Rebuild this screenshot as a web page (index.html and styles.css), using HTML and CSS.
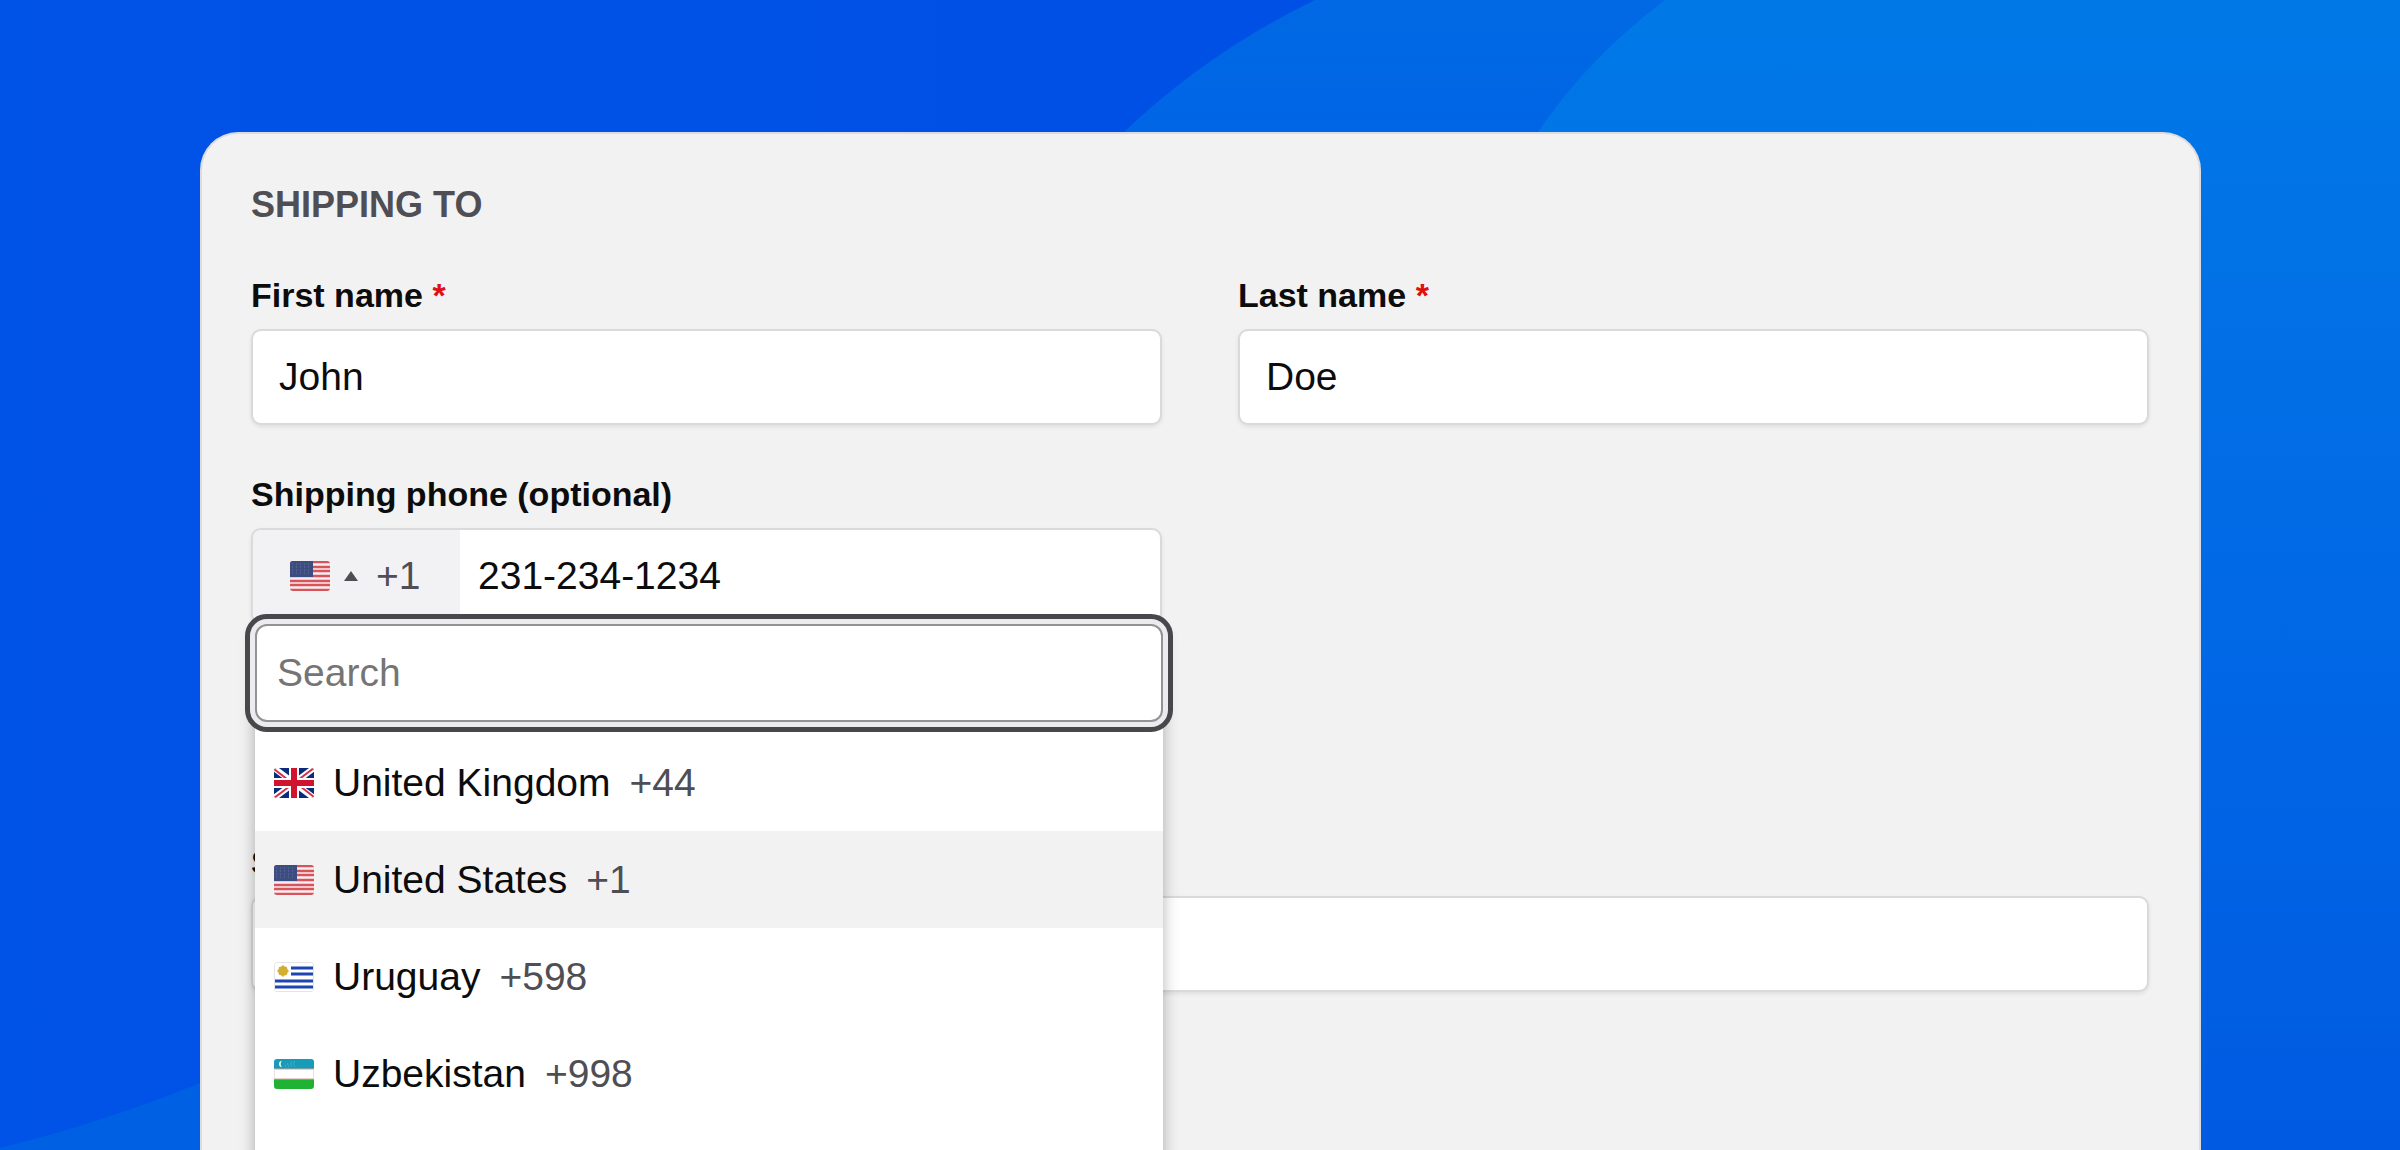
FILE: index.html
```html
<!DOCTYPE html>
<html lang="en">
<head>
    <meta charset="UTF-8">
    <title>Shipping details</title>
    <link rel="stylesheet" href="styles.css">
</head>
<body>
    <svg class="backdrop" viewBox="0 0 2400 1150" preserveAspectRatio="none" aria-hidden="true">
        <defs>
            <linearGradient id="base" x1="0" y1="0" x2="1" y2="0">
                <stop offset="0" stop-color="#0053e7"/>
                <stop offset="0.5" stop-color="#0050e6"/>
            </linearGradient>
            <linearGradient id="outer" x1="0" y1="0" x2="0" y2="1">
                <stop offset="0" stop-color="#0069e3"/>
                <stop offset="0.12" stop-color="#0065e6"/>
                <stop offset="1" stop-color="#0060e4"/>
            </linearGradient>
            <linearGradient id="inner" x1="0" y1="0" x2="0" y2="1">
                <stop offset="0" stop-color="#0079e6"/>
                <stop offset="0.3" stop-color="#026fe6"/>
                <stop offset="0.6" stop-color="#0066e5"/>
                <stop offset="1" stop-color="#005be2"/>
            </linearGradient>
        </defs>
        <rect width="2400" height="1150" fill="url(#base)"/>
        <path d="M1315 0Q1208 52 1124 132L1000 400L400 1000L200 1083Q105 1122 0 1148V1150H2400V0Z" fill="url(#outer)"/>
        <path d="M1665 0Q1588 58 1538 132L1400 1150H2400V0Z" fill="url(#inner)"/>
    </svg>

    <!-- flags, shared by the dial code button and the country list -->
    <svg class="sprite" aria-hidden="true">
        <symbol id="flag-us" viewBox="0 0 40 30">
            <rect width="40" height="30" fill="#f6eef0"/>
            <path d="M0 1H40M0 6H40M0 10H40M0 15H40M0 20H40M0 24H40M0 29H40" stroke="#d9535b" stroke-width="2.4"/>
            <rect width="23" height="16" fill="#3c4d80"/>
            <path d="M2 3H22M2 6H22M2 9H22M2 12H22" stroke="#65729a" stroke-width="1" stroke-dasharray="1 3"/>
        </symbol>
        <symbol id="flag-gb" viewBox="0 0 40 30">
            <rect width="40" height="30" fill="#0a2a7c"/>
            <path d="M0 0L40 30M40 0L0 30" stroke="#fff" stroke-width="6"/>
            <path d="M0 1L18 15M40 0L20 15M20 15L0 30M22 15L40 29" stroke="#d5304a" stroke-width="2"/>
            <path d="M20 0V30M0 15H40" stroke="#fff" stroke-width="10"/>
            <path d="M20 0V30M0 15H40" stroke="#d0142f" stroke-width="6"/>
        </symbol>
        <symbol id="flag-uy" viewBox="0 0 40 30">
            <rect width="40" height="30" fill="#fff"/>
            <path d="M17 6H40M17 12H40M0 19H40M0 25H40" stroke="#1f45b0" stroke-width="3"/>
            <circle cx="9" cy="9" r="5" fill="#d3ae35"/>
            <path d="M9 3V15M3 9H15M5 5L13 13M13 5L5 13" stroke="#d3ae35" stroke-width="1"/>
            <rect x="0.5" y="0.5" width="39" height="29" rx="2" fill="none" stroke="#e4e4e6"/>
        </symbol>
        <symbol id="flag-uz" viewBox="0 0 40 30">
            <rect width="40" height="30" fill="#fff"/>
            <rect width="40" height="10" fill="#169bb8"/>
            <rect y="20" width="40" height="10" fill="#20b233"/>
            <path d="M0 10H40M0 20H40" stroke="#d9a199" stroke-width="1"/>
            <path d="M0.5 10V20M39.5 10V20" stroke="#e4e4e6" stroke-width="1"/>
            <path d="M8 2A3 3 0 1 0 8 8A4 4 0 0 1 8 2Z" fill="#fff"/>
            <path d="M11 7H22M13 5H22M17 3H22" stroke="#5fb9cc" stroke-width="1" stroke-dasharray="1 2"/>
        </symbol>
    </svg>

    <form class="card">
        <h2 class="title">SHIPPING TO</h2>
        <div class="grid">
            <div class="field">
                <label for="firstName">First name <span class="required">*</span></label>
                <input class="input" type="text" id="firstName" value="John">
            </div>
            <div class="field">
                <label for="lastName">Last name <span class="required">*</span></label>
                <input class="input" type="text" id="lastName" value="Doe">
            </div>
            <div class="field">
                <label for="phone">Shipping phone (optional)</label>
                <div class="phone">
                    <button class="dial" type="button" aria-expanded="true">
                        <svg class="flag"><use href="#flag-us"/></svg>
                        <span class="arrow"></span>
                        <span>+1</span>
                    </button>
                    <input class="phone-input" type="tel" id="phone" value="231-234-1234">
                    <div class="dropdown">
                        <input class="search" type="text" placeholder="Search" aria-label="Search">
                        <ul class="countries">
                            <li class="country"><svg class="flag"><use href="#flag-gb"/></svg><span>United Kingdom</span><span class="code">+44</span></li>
                            <li class="country active"><svg class="flag"><use href="#flag-us"/></svg><span>United States</span><span class="code">+1</span></li>
                            <li class="country"><svg class="flag"><use href="#flag-uy"/></svg><span>Uruguay</span><span class="code">+598</span></li>
                            <li class="country"><svg class="flag"><use href="#flag-uz"/></svg><span>Uzbekistan</span><span class="code">+998</span></li>
                        </ul>
                    </div>
                </div>
            </div>
            <div class="field wide">
                <label for="street">Street</label>
                <input class="input" type="text" id="street">
            </div>
        </div>
    </form>
</body>
</html>
```

FILE: styles.css
```css
* {
    box-sizing: border-box;
}
body {
    margin: 0;
    height: 100vh;
    overflow: hidden;
    display: flex;
    font-family: "Liberation Sans", Arial, sans-serif;
    font-size: 39px;
    color: #0c0c0d;
    background: #0052e6;
}
.backdrop {
    position: absolute;
    top: 0;
    left: 0;
    width: 100%;
    height: 100%;
    z-index: -1;
}
.sprite {
    position: absolute;
    width: 0;
    height: 0;
}
.card {
    flex: 1;
    margin: 132px 199px 0 200px;
    padding: 47px 50px 0 49px;
    background: #f2f2f3;
    border: 2px solid #dcdcde;
    border-bottom: none;
    border-radius: 38px 38px 0 0;
}
.title {
    margin: 0 0 48px;
    font-size: 36px;
    line-height: 48px;
    color: #504e55;
}
.grid {
    display: grid;
    grid-template-columns: 1fr 1fr;
    gap: 51px 76px;
}
.field {
    display: flex;
    flex-direction: column;
    gap: 16px;
}
.wide {
    grid-column: 1 / -1;
    margin-top: 169px;
}
label {
    font-size: 34px;
    font-weight: bold;
    line-height: 36px;
}
.required {
    color: #e01010;
}
.input,
.phone {
    height: 96px;
    background: #fff;
    border: 2px solid #dadadc;
    border-radius: 10px;
    box-shadow: 0 2px 4px rgba(0, 0, 0, 0.08);
}
input {
    width: 100%;
    padding: 0 26px;
    font: inherit;
    color: inherit;
}
.phone {
    position: relative;
    display: flex;
}
.dial {
    display: flex;
    align-items: center;
    flex: none;
    width: 207px;
    padding: 0 0 0 37px;
    border: none;
    border-radius: 8px 0 0 8px;
    background: #f2f2f4;
    font: inherit;
    color: #504e55;
}
.flag {
    flex: none;
    width: 40px;
    height: 30px;
    border-radius: 3px;
}
.arrow {
    margin: 0 18px 0 14px;
    border: 7px solid transparent;
    border-top: none;
    border-bottom: 10px solid #504e55;
}
.phone-input {
    padding: 0 18px;
    border: none;
    background: none;
}
.dropdown {
    position: absolute;
    top: 94px;
    left: 2px;
    right: -3px;
    background: #fff;
    box-shadow: 0 6px 16px rgba(0, 0, 0, 0.3);
    border-radius: 10px;
}
.search {
    display: block;
    height: 98px;
    padding: 0 20px;
    border: 2px solid #939295;
    border-radius: 12px;
    background: #fff;
    outline: 5px solid #48474b;
    outline-offset: 5px;
    box-shadow: 0 0 0 5px #ececee;
}
.search::placeholder {
    color: #757575;
    opacity: 1;
}
.countries {
    margin: 0;
    padding: 12px 0 97px;
    list-style: none;
}
.country {
    display: flex;
    align-items: center;
    height: 97px;
    padding: 0 19px;
    gap: 19px;
}
.country .code {
    color: #504e55;
}
.active {
    background: #f2f2f3;
}
```
